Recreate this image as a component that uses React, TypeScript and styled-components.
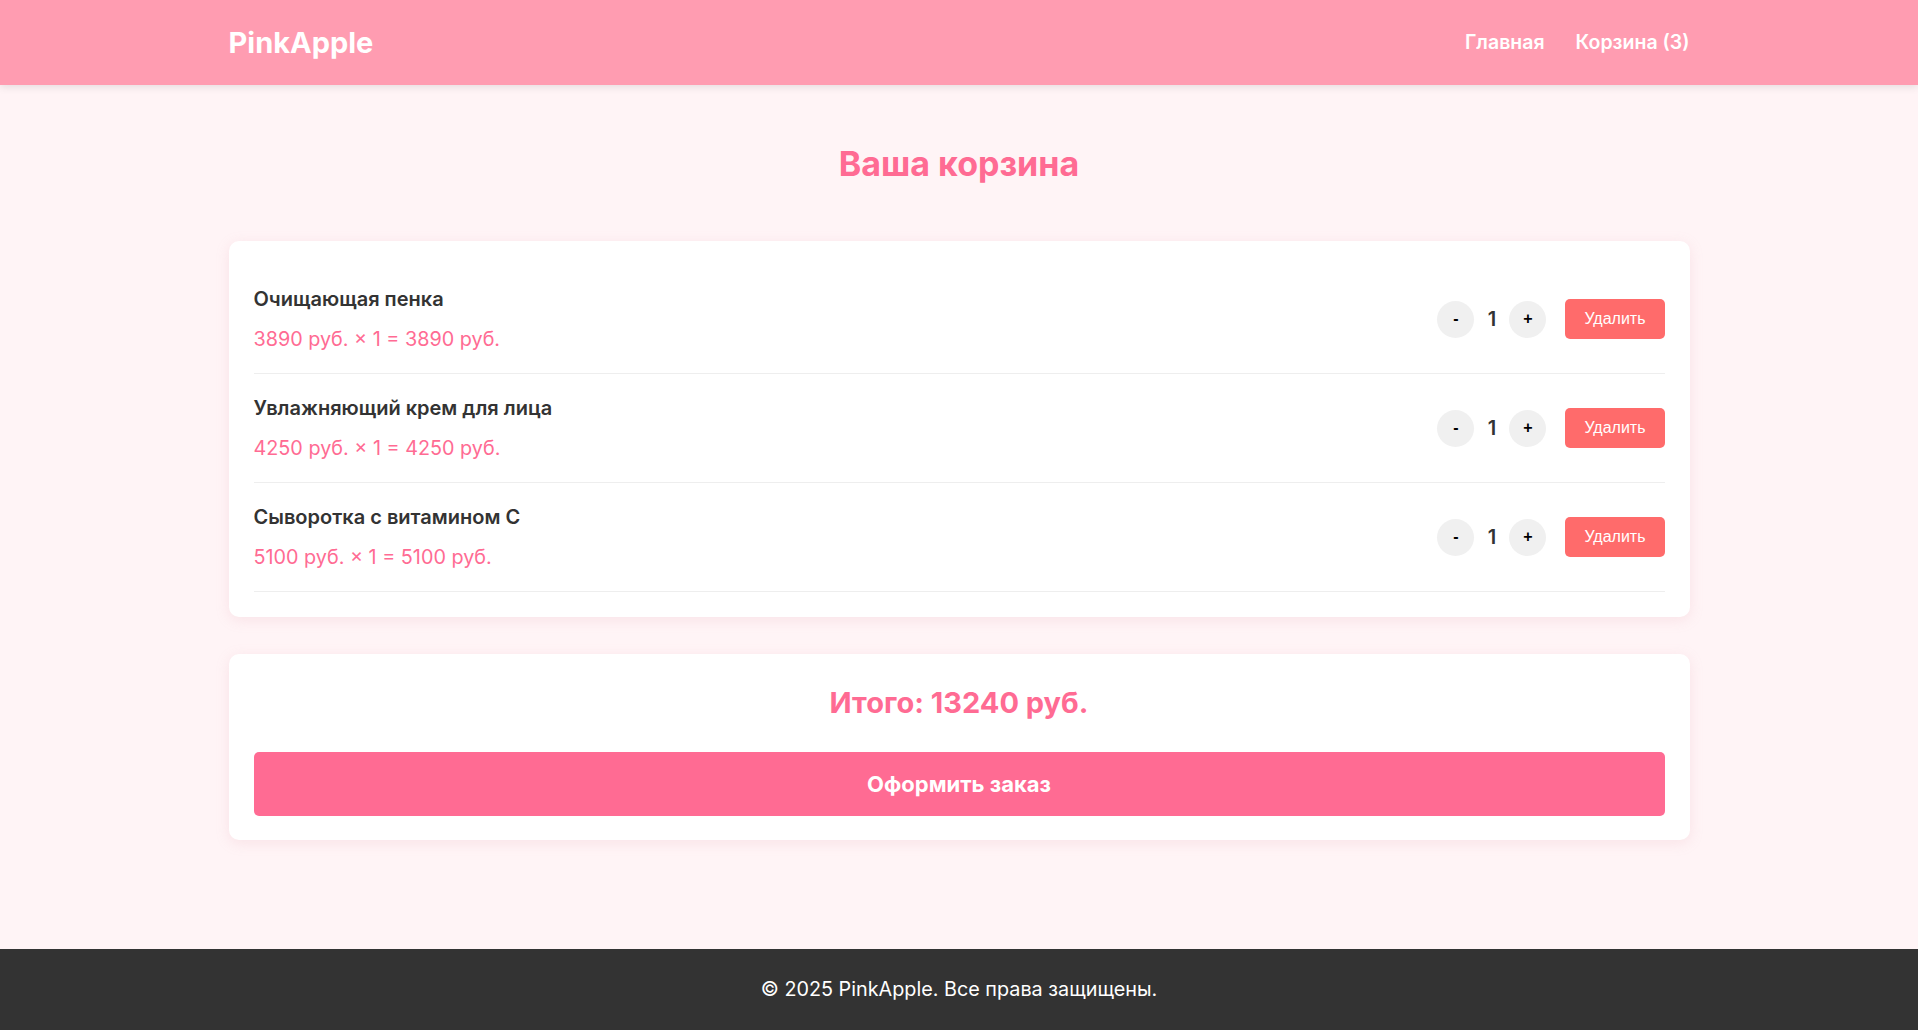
import React, { useState } from "react";
import styled, { createGlobalStyle } from "styled-components";

const GlobalStyle = createGlobalStyle`
  * { box-sizing: border-box; }
  html, body { margin: 0; padding: 0; }
  body {
    font-family: Inter, "Noto Sans", sans-serif;
    font-size: 20px;
    line-height: 1.5;
    color: #333333;
    background: #fff4f6;
  }
`;

const Page = styled.div`
  min-height: 100vh;
  display: flex;
  flex-direction: column;
`;

const Header = styled.header`
  background: #ff9cb1;
  box-shadow: 0 2px 8px rgba(0, 0, 0, 0.1);
  height: 85px;
  display: flex;
  align-items: center;
`;

const Container = styled.div`
  width: 100%;
  max-width: 1501px;
  margin: 0 auto;
  padding: 0 20px;
`;

const HeaderInner = styled(Container)`
  display: flex;
  align-items: center;
  justify-content: space-between;
`;

const Logo = styled.a`
  font-size: 29px;
  font-weight: 700;
  color: #ffffff;
  text-decoration: none;
`;

const Nav = styled.nav`
  display: flex;
  gap: 31px;
`;

const NavLink = styled.a`
  color: #ffffff;
  text-decoration: none;
  font-size: 19.5px;
  font-weight: 600;
`;

const Main = styled.main`
  flex: 1;
  padding: 40px 0 60px;
`;

const Title = styled.h1`
  margin: 19px 0 57px;
  text-align: center;
  color: #ff6b93;
  font-size: 34px;
  line-height: 40px;
  font-weight: 700;
`;

const Card = styled.section`
  background: #ffffff;
  border-radius: 10px;
  box-shadow: 0 3px 14px rgba(220, 150, 165, 0.18);
  padding: 25px;
`;

const ItemsCard = styled(Card)`
  padding: 24px 25px 25px;
  margin-bottom: 37px;
`;

const Row = styled.div`
  display: flex;
  align-items: center;
  justify-content: space-between;
  padding: 19px 0;
  border-bottom: 1px solid #eeeeee;
`;

const ItemInfo = styled.div`
  display: flex;
  flex-direction: column;
`;

const ItemName = styled.h3`
  margin: 0 0 10px;
  font-size: 20px;
  line-height: 30px;
  font-weight: 600;
  color: #333333;
`;

const ItemPrice = styled.p`
  margin: 0;
  font-size: 19.8px;
  line-height: 30px;
  color: #ff6b93;
`;

const Controls = styled.div`
  display: flex;
  align-items: center;
  gap: 19px;
`;

const Qty = styled.div`
  display: flex;
  align-items: center;
  gap: 12px;
`;

const QtyButton = styled.button`
  width: 37px;
  height: 37px;
  border-radius: 50%;
  border: none;
  background: #f0f0f0;
  color: #000000;
  font-family: "Liberation Sans", Arial, sans-serif;
  font-size: 16px;
  font-weight: 700;
  padding: 0;
  cursor: pointer;
  display: flex;
  align-items: center;
  justify-content: center;
`;

const QtyValue = styled.span`
  font-size: 20px;
  font-weight: 600;
  color: #333333;
  min-width: 11px;
  text-align: center;
`;

const DeleteButton = styled.button`
  height: 40px;
  padding: 0 19px;
  border: none;
  border-radius: 5px;
  background: #ff6b6b;
  color: #ffffff;
  font-family: "Liberation Sans", Arial, sans-serif;
  font-size: 16px;
  cursor: pointer;
`;

const TotalCard = styled(Card)`
  padding: 25px 25px 24px;
`;

const Total = styled.h2`
  margin: 4px 0 30px;
  text-align: center;
  color: #ff6b93;
  font-size: 29px;
  line-height: 39px;
  font-weight: 700;
`;

const Checkout = styled.button`
  display: block;
  width: 100%;
  height: 64px;
  border: none;
  border-radius: 5px;
  background: #ff6b93;
  color: #ffffff;
  font-family: Inter, "Noto Sans", sans-serif;
  font-size: 22px;
  font-weight: 700;
  cursor: pointer;
`;

const Footer = styled.footer`
  background: #333333;
  color: #ffffff;
  text-align: center;
  padding: 25px 0;
  font-size: 19.8px;
  line-height: 31px;
`;

type Item = { id: number; name: string; price: number; qty: number };

const initialItems: Item[] = [
  { id: 1, name: "Очищающая пенка", price: 3890, qty: 1 },
  { id: 2, name: "Увлажняющий крем для лица", price: 4250, qty: 1 },
  { id: 3, name: "Сыворотка с витамином C", price: 5100, qty: 1 },
];

export default function App() {
  const [items, setItems] = useState<Item[]>(initialItems);
  const count = items.reduce((s, i) => s + i.qty, 0);
  const total = items.reduce((s, i) => s + i.qty * i.price, 0);

  const change = (id: number, d: number) =>
    setItems((prev) =>
      prev.map((i) => (i.id === id ? { ...i, qty: Math.max(1, i.qty + d) } : i))
    );
  const remove = (id: number) => setItems((prev) => prev.filter((i) => i.id !== id));

  return (
    <>
      <GlobalStyle />
      <Page>
        <Header>
          <HeaderInner>
            <Logo href="#">PinkApple</Logo>
            <Nav>
              <NavLink href="#">Главная</NavLink>
              <NavLink href="#">Корзина ({count})</NavLink>
            </Nav>
          </HeaderInner>
        </Header>
        <Main>
          <Container>
            <Title>Ваша корзина</Title>
            <ItemsCard>
              {items.map((item) => (
                <Row key={item.id}>
                  <ItemInfo>
                    <ItemName>{item.name}</ItemName>
                    <ItemPrice>
                      {item.price} руб. × {item.qty} = {item.price * item.qty} руб.
                    </ItemPrice>
                  </ItemInfo>
                  <Controls>
                    <Qty>
                      <QtyButton onClick={() => change(item.id, -1)}>-</QtyButton>
                      <QtyValue>{item.qty}</QtyValue>
                      <QtyButton onClick={() => change(item.id, 1)}>+</QtyButton>
                    </Qty>
                    <DeleteButton onClick={() => remove(item.id)}>Удалить</DeleteButton>
                  </Controls>
                </Row>
              ))}
            </ItemsCard>
            <TotalCard>
              <Total>Итого: {total} руб.</Total>
              <Checkout>Оформить заказ</Checkout>
            </TotalCard>
          </Container>
        </Main>
        <Footer>© 2025 PinkApple. Все права защищены.</Footer>
      </Page>
    </>
  );
}
